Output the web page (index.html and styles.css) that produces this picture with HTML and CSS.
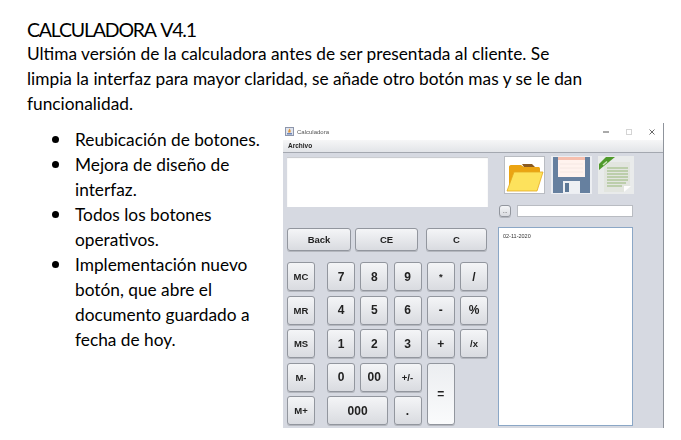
FILE: index.html
```html
<!DOCTYPE html>
<html lang="es">
<head>
<meta charset="utf-8">
<title>Calculadora V4.1</title>
<link rel="stylesheet" href="styles.css">
</head>
<body>
<main class="page">
  <h1 class="heading">CALCULADORA V4.1</h1>
  <p class="intro">Ultima versión de la calculadora antes de ser presentada al cliente. Se<br>limpia la interfaz para mayor claridad, se añade otro botón mas y se le dan<br>funcionalidad.</p>
  <div class="row">
    <ul class="bullets">
      <li><span>Reubicación de botones.</span></li>
      <li><span>Mejora de diseño de<br>interfaz.</span></li>
      <li><span>Todos los botones<br>operativos.</span></li>
      <li><span>Implementación nuevo<br>botón, que abre el<br>documento guardado a<br>fecha de hoy.</span></li>
    </ul>
    <section class="window">
      <header class="titlebar">
        <svg class="appicon" width="9" height="9" viewBox="0 0 9 9"><rect x=".5" y=".5" width="8" height="8" fill="#dfe4ee" stroke="#8d96ab"/><path d="M4.500 1.500c1 1.500 1.500 2.500 1 4H3.200c-.3-1 .5-2.500 1.300-4z" fill="#e2953a"/><rect x="2" y="6" width="5" height="1.500" fill="#6f86b5"/></svg>
        <span class="apptitle">Calculadora</span>
        <span class="winctl">
          <svg width="6" height="6" viewBox="0 0 6 6"><path d="M0 3h6" stroke="#555"/></svg>
          <svg width="6" height="6" viewBox="0 0 6 6"><rect x=".5" y=".5" width="5" height="5" fill="none" stroke="#d4d4d4"/></svg>
          <svg width="6" height="6" viewBox="0 0 6 6"><path d="M.5.500l5 5M5.500.500l-5 5" stroke="#444" stroke-width=".8"/></svg>
        </span>
      </header>
      <nav class="menubar">Archivo</nav>
      <div class="client">
        <div class="left">
          <div class="display"></div>
          <div class="actions">
            <button class="key wide-back">Back</button>
            <button class="key wide-ce">CE</button>
            <button class="key wide-c">C</button>
          </div>
          <div class="pads">
            <div class="memory">
              <button class="key">MC</button>
              <button class="key">MR</button>
              <button class="key">MS</button>
              <button class="key">M-</button>
              <button class="key">M+</button>
            </div>
            <div class="keypad">
              <button class="key big">7</button>
              <button class="key big">8</button>
              <button class="key big">9</button>
              <button class="key">*</button>
              <button class="key big">/</button>
              <button class="key big">4</button>
              <button class="key big">5</button>
              <button class="key big">6</button>
              <button class="key big">-</button>
              <button class="key big">%</button>
              <button class="key big">1</button>
              <button class="key big">2</button>
              <button class="key big">3</button>
              <button class="key big">+</button>
              <button class="key">/x</button>
              <button class="key big">0</button>
              <button class="key big">00</button>
              <button class="key">+/-</button>
              <button class="key equals">=</button>
              <button class="key big span2">000</button>
              <button class="key big">.</button>
            </div>
          </div>
        </div>
        <aside class="right">
          <div class="tools">
            <div class="tool">
              <svg width="39" height="36" viewBox="0 0 39 36"><path d="M4 32V10c0-1 .5-2 2-2h10l3 2h14c1.500 0 2 .5 2 2v4H10z" fill="#eba412"/><path d="M17 7h10l3 3H19z" fill="#8a5a20"/><path d="M9 15h29l-6 19H2z" fill="#fde25c" stroke="#e3a91e" stroke-width=".8"/></svg>
            </div>
            <div class="tool floppy">
              <svg width="41" height="38" viewBox="0 0 41 38"><rect width="41" height="38" fill="#eceef2"/><path d="M2 1h37v36H2z" fill="#66809f"/><rect x="7" y="1" width="27" height="20" fill="#fff3ee"/><rect x="7" y="1" width="27" height="3" fill="#f6bfae"/><path d="M9 8h23M9 12h23M9 16h23" stroke="#f5e8e3"/><rect x="12" y="25" width="17" height="12" fill="#eef0f3"/><rect x="14" y="27" width="4" height="9" fill="#5d7896"/></svg>
            </div>
            <div class="tool note">
              <svg width="36" height="38" viewBox="0 0 36 38"><rect width="36" height="38" fill="#e9ebeb"/><path d="M6 6h26v24l-6 6H6z" fill="#e2e5df"/><path d="M9 12h21M9 15h21M9 18h21M9 21h21M9 24h21M9 27h19M9 30h15" stroke="#b0c69a" stroke-width="1.300"/><path d="M26 36v-6h7z" fill="#fdfdfd"/><path d="M1 14V8L8 1h9z" fill="#4f9a2c"/><path d="M5 9l4-3.500" stroke="#cfe5bf" stroke-width="1.500"/></svg>
            </div>
          </div>
          <div class="pathrow">
            <button class="key dots">...</button>
            <div class="pathfield"></div>
          </div>
          <div class="notes">02-11-2020</div>
        </aside>
      </div>
    </section>
  </div>
</main>
</body>
</html>
```
FILE: styles.css
```css
html, body {
  margin: 0;
  padding: 0;
  background: #fff;
}
.page {
  width: 681px;
  height: 440px;
  overflow: hidden;
  padding: 18px 0 0 27px;
  box-sizing: border-box;
  font-family: "Lato", "Liberation Sans", sans-serif;
  color: #000;
}
.heading {
  margin: 0;
  font-size: 19.5px;
  line-height: 23px;
  font-weight: 400;
  letter-spacing: -1.2px;
  word-spacing: 2px;
}
.intro {
  margin: 0;
  font-size: 17.3px;
  line-height: 25px;
}
.row {
  display: flex;
  margin-top: 7px;
}
.bullets {
  list-style: none;
  width: 256px;
  margin: 0;
  padding: 4px 0 0 25px;
  box-sizing: border-box;
  font-size: 17.3px;
  line-height: 25px;
}
.bullets li {
  display: flex;
  gap: 16px;
}
.bullets li::before {
  content: "";
  flex: none;
  width: 7px;
  height: 7px;
  margin-top: 9px;
  border-radius: 50%;
  background: #000;
}
.window {
  width: 381px;
  height: 305px;
  display: flex;
  flex-direction: column;
  border-right: 1px solid #8f949c;
  box-sizing: border-box;
  font-family: "Liberation Sans", Arial, sans-serif;
  filter: blur(0.3px);
}
.titlebar {
  height: 17px;
  flex: none;
  display: flex;
  align-items: center;
  gap: 3px;
  padding: 0 8px 0 2px;
  background: #fff;
}
.apptitle {
  font-size: 6px;
  color: #555;
}
.winctl {
  margin-left: auto;
  display: flex;
  gap: 17px;
}
.menubar {
  height: 13px;
  flex: none;
  padding-left: 5px;
  box-sizing: border-box;
  font-size: 6.5px;
  line-height: 12px;
  font-weight: 700;
  color: #222;
  background: linear-gradient(#f6f6f7, #e2e4e8);
  border-bottom: 1px solid #a4a8b0;
}
.client {
  flex: 1;
  display: flex;
  gap: 10px;
  padding: 4px 0 0 4px;
  background: #d6d9e1;
}
.left {
  width: 201px;
  display: flex;
  flex-direction: column;
}
.display {
  height: 50px;
  flex: none;
  background: #fff;
  box-shadow: inset 0 1px 1px #c6c8cc;
}
.key {
  margin: 0;
  padding: 0;
  font-family: "Liberation Sans", Arial, sans-serif;
  font-size: 9.5px;
  font-weight: 700;
  color: #222;
  border: 1px solid #92969e;
  border-radius: 3px;
  background: linear-gradient(#f4f5f7, #d9dbe0);
  box-shadow: 0 1px 0 #b4b7be;
}
.big {
  font-size: 12px;
}
.actions {
  display: flex;
  height: 23px;
  flex: none;
  margin-top: 21px;
}
.wide-back {
  width: 64px;
}
.wide-ce {
  width: 63px;
  margin-left: 4px;
}
.wide-c {
  width: 61px;
  margin-left: 8px;
}
.pads {
  display: flex;
  gap: 12px;
  margin-top: 11px;
}
.memory {
  width: 28px;
  display: flex;
  flex-direction: column;
  gap: 4.500px;
}
.memory .key {
  height: 29px;
  flex: none;
}
.keypad {
  display: grid;
  grid-template-columns: repeat(5, 28px);
  grid-auto-rows: 29px;
  gap: 4.500px 5.250px;
}
.span2 {
  grid-column: span 2;
}
.equals {
  grid-column: 4;
  grid-row: 4 / span 2;
  background: linear-gradient(#eceef1, #fafbfc);
  font-size: 12px;
}
.right {
  width: 135px;
  display: flex;
  flex-direction: column;
}
.tools {
  display: flex;
  gap: 6px;
  margin: -1px 0 0 6px;
  height: 38px;
}
.tool {
  width: 41px;
  height: 38px;
  box-sizing: border-box;
  display: flex;
  align-items: center;
  justify-content: center;
  background: #fff;
  border: 1px solid #b9bcc2;
}
.tool svg {
  flex: none;
}
.floppy, .note {
  border: 0;
  background: none;
}
.note {
  width: 36px;
}
.pathrow {
  display: flex;
  gap: 6px;
  margin: 11px 0 0 1px;
  height: 12px;
}
.dots {
  width: 12px;
  height: 12px;
  font-size: 6px;
  line-height: 8px;
  font-weight: 400;
}
.pathfield {
  width: 116px;
  background: #fff;
  border: 1px solid #b9bcc2;
  box-sizing: border-box;
}
.notes {
  width: 135px;
  height: 199px;
  margin-top: 10px;
  padding: 5px 4px;
  box-sizing: border-box;
  font-size: 5.500px;
  color: #333;
  background: #fff;
  border: 1px solid #8ba7c6;
}
```
